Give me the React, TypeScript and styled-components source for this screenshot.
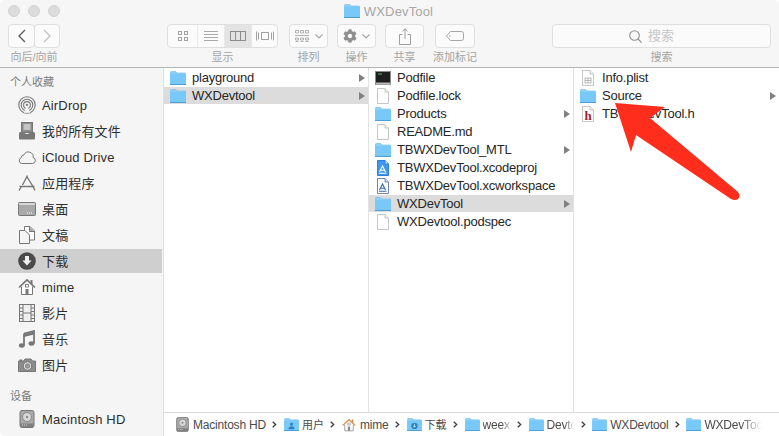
import React from 'react';
import styled, { createGlobalStyle } from 'styled-components';
import { FaCog } from 'react-icons/fa';

const FONT = '"Liberation Sans", "Noto Sans CJK SC", sans-serif';

const GlobalStyle = createGlobalStyle`
    html, body {
        margin: 0;
        padding: 0;
        background: #ffffff;
        overflow: hidden;
    }
    * {
        box-sizing: border-box;
    }
`;

// ---- icons ----

const FolderIcon = ({ size = 16, glyph }: { size?: number; glyph?: string }) => (
    <svg width={size} height={Math.round(size * 0.875)} viewBox="0 0 16 14">
        <path d="M0.5 1.2Q0.5 0.5 1.2 0.5H5.6L7 2H15Q15.6 2 15.6 2.7V4H0.5Z" fill="#8bd0f8" stroke="#6fb9ea" strokeWidth="0.6" />
        <rect x="0" y="3" width="16" height="11" rx="0.6" fill="#78c8fa" />
        <rect x="0" y="13" width="16" height="1" fill="#4c9fd8" />
        {glyph === 'user' && <path d="M8 5.2a1.6 1.6 0 1 1 0 3.2a1.6 1.6 0 1 1 0-3.2zM4.8 12q.3-3 3.2-3t3.2 3z" fill="#2f7fb8" />}
        {glyph === 'down' && <g><circle cx="8" cy="8.5" r="3.4" fill="#2f7fb8" /><path d="M8 6.2v3.6M6.4 8.4L8 10l1.6-1.6" stroke="#a8dcfb" strokeWidth="1" fill="none" /></g>}
    </svg>
);

const DocIcon = ({ children }: { children?: React.ReactNode }) => (
    <svg width="14" height="16" viewBox="0 0 14 16">
        <path d="M1.5 0.5H9L12.5 4V15.5H1.5Z" fill="#ffffff" stroke="#c6c6c6" />
        <path d="M9 0.5V4H12.5" fill="#f0f0f0" stroke="#c6c6c6" />
        {children}
    </svg>
);

const TerminalIcon = () => (
    <svg width="16" height="14" viewBox="0 0 16 14">
        <rect x="0.5" y="0.5" width="15" height="13" fill="#1d1d1d" stroke="#8a8a8a" />
        <rect x="1" y="11.5" width="14" height="2" fill="#b9b9b9" />
        <path d="M3 3h4" stroke="#4fbf60" strokeWidth="1" />
    </svg>
);

const XcodeIcon = ({ solid }: { solid?: boolean }) => (
    <svg width="14" height="16" viewBox="0 0 14 16">
        <path d="M1.5 0.5H9L12.5 4V15.5H1.5Z" fill={solid ? '#3f97ee' : '#ffffff'} stroke={solid ? '#2a7fdc' : '#6f87a8'} />
        <path d="M9 0.5V4H12.5" fill="#d8e8f8" stroke={solid ? '#2a7fdc' : '#6f87a8'} />
        <path d="M3.5 12L6.5 6L9.5 12M4 10.2H9M3 13.2H10.5" stroke={solid ? '#ffffff' : '#2f67ad'} strokeWidth="1.1" fill="none" />
    </svg>
);

const PlistIcon = () => (
    <DocIcon>
        <rect x="4" y="8" width="6" height="5" fill="#ffffff" stroke="#a8a8a8" strokeWidth="0.8" />
        <path d="M4 10.5h6M7 8v5" stroke="#a8a8a8" strokeWidth="0.8" />
    </DocIcon>
);

const HeaderIcon = () => (
    <DocIcon>
        <text x="7" y="13.5" textAnchor="middle" fontFamily='"Liberation Serif", serif' fontWeight="700" fontSize="13" fill="#a3162f">h</text>
    </DocIcon>
);

const GRAY = '#777777';

const AirDropIcon = () => (
    <svg width="18" height="18" viewBox="0 0 18 18" fill="none" stroke={GRAY}>
        <circle cx="9" cy="9" r="8.2" strokeWidth="1.1" />
        <circle cx="9" cy="9" r="5.8" strokeWidth="1.1" />
        <circle cx="9" cy="9" r="3.4" strokeWidth="1.1" />
        <circle cx="9" cy="9" r="1.2" fill={GRAY} stroke="none" />
        <path d="M5.8 16.8L9 9l3.2 7.8z" fill="#f5f5f5" stroke="none" />
    </svg>
);

const AllFilesIcon = () => (
    <svg width="18" height="18" viewBox="0 0 18 18">
        <rect x="3.5" y="0.5" width="11" height="10" fill="#8a8a8a" stroke={GRAY} />
        <path d="M5.5 3h7M5.5 5h7M5.5 7h7" stroke="#ffffff" />
        <path d="M2 10h4q.5 2 3 2t3-2h4l1 1v5.5q0 1-1 1H2q-1 0-1-1V11z" fill={GRAY} />
    </svg>
);

const CloudIcon = () => (
    <svg width="18" height="18" viewBox="0 0 18 18">
        <path d="M3.8 15.500H14.500a3 3 0 0 0 .6-5.900A4.800 4.800 0 0 0 6 6.800a3 3 0 0 0-2.800 2.900A3 3 0 0 0 3.800 15.500z" fill="none" stroke={GRAY} />
    </svg>
);

const AppsIcon = () => (
    <svg width="18" height="18" viewBox="0 0 18 18" fill="none" stroke={GRAY} strokeWidth="1.4">
        <path d="M9.5 1.5L4.5 11M1 16.5L3.5 12.5M8.5 2L15 12.5L17 16.5M1.5 12.5H16.5" />
    </svg>
);

const DesktopIcon = () => (
    <svg width="18" height="18" viewBox="0 0 18 18">
        <rect x="0.5" y="2.5" width="17" height="13" rx="1" fill="#a9a9a9" stroke={GRAY} />
        <rect x="1" y="3" width="16" height="2" fill="#d6d6d6" />
        <path d="M9 13h1M11 13h1M13 13h1" stroke="#ffffff" />
    </svg>
);

const DocumentsIcon = () => (
    <svg width="18" height="18" viewBox="0 0 18 18">
        <path d="M6.5 0.5H12L16.5 5V14H6.5Z" fill="#ffffff" stroke={GRAY} />
        <path d="M11.5 1V5.5H16" fill="#a8a8a8" stroke={GRAY} />
        <path d="M1.5 4.5H7L11.5 9V17.5H1.5Z" fill="#f5f5f5" stroke={GRAY} />
    </svg>
);

const DownloadsIcon = () => (
    <svg width="18" height="18" viewBox="0 0 18 18">
        <circle cx="9" cy="9" r="8.8" fill="#4a4a4a" />
        <path d="M7 4h4v4.5h2.6L9 13.6L4.4 8.5H7z" fill="#f0f0f0" />
    </svg>
);

const HomeIcon = ({ color = GRAY, roof = GRAY, size = 18 }: { color?: string; roof?: string; size?: number }) => (
    <svg width={size} height={size} viewBox="0 0 18 18" fill="none">
        <path d="M3.5 8.5V16.5H14.5V8.5" stroke={color} fill="#ffffff" />
        <path d="M1 9.5L9 2L17 9.5" stroke={roof} strokeWidth="1.7" />
        <rect x="12.5" y="2" width="2" height="4" fill={roof} />
        <rect x="7.5" y="11" width="3" height="5.5" fill={color} />
        <rect x="7.5" y="6.5" width="3" height="2.5" stroke={color} strokeWidth="0.8" />
    </svg>
);

const MoviesIcon = () => (
    <svg width="18" height="18" viewBox="0 0 18 18">
        <rect x="1.5" y="0.5" width="15" height="17" fill="#efefef" stroke={GRAY} />
        <path d="M5 1v16M13 1v16M5 9h8M1.5 4h3.5M1.5 7.5h3.5M1.5 11h3.5M1.5 14.500h3.500M13 4h3.500M13 7.500h3.500M13 11h3.500M13 14.500h3.500" stroke={GRAY} fill="none" />
    </svg>
);

const MusicIcon = () => (
    <svg width="18" height="18" viewBox="0 0 18 18">
        <path d="M6 3.500L16 1V13.500" fill="none" stroke={GRAY} strokeWidth="1.800" />
        <path d="M6 3.500V15.500" stroke={GRAY} strokeWidth="1.800" />
        <path d="M6 4L16 1.500V4.500L6 7z" fill={GRAY} />
        <ellipse cx="3.800" cy="15.500" rx="2.900" ry="2.200" fill={GRAY} />
        <ellipse cx="13.500" cy="13.500" rx="2.900" ry="2.200" fill={GRAY} />
    </svg>
);

const CameraIcon = () => (
    <svg width="18" height="18" viewBox="0 0 18 18">
        <path d="M0.500 5H5.500L7 3H13L14.500 5H17.500V15.500H0.500Z" fill="#8c8c8c" stroke={GRAY} />
        <rect x="1.500" y="3.500" width="2.500" height="1.500" fill={GRAY} />
        <circle cx="9.500" cy="10" r="4.200" fill="#e2e2e2" stroke={GRAY} />
        <circle cx="9.500" cy="10" r="2.300" fill="#9a9a9a" stroke={GRAY} strokeWidth="0.700" />
    </svg>
);

const DriveIcon = ({ size = 18 }: { size?: number }) => (
    <svg width={size} height={size} viewBox="0 0 18 18">
        <rect x="2" y="0.500" width="14" height="17" rx="2" fill="#a9a9a9" stroke={GRAY} />
        <circle cx="9" cy="7" r="4.500" fill="#d8d8d8" stroke="#8a8a8a" />
        <circle cx="9" cy="7" r="1.200" fill="#8a8a8a" />
        <rect x="2.500" y="13.500" width="13" height="3.500" fill="#808080" />
        <path d="M4 15h1M6 15h1M8 15h1" stroke="#d8d8d8" />
    </svg>
);

const BackIcon = () => (
    <svg width="10" height="14" viewBox="0 0 10 14" fill="none" stroke="#5c5c5c" strokeWidth="1.400">
        <path d="M8 1L2 7L8 13" />
    </svg>
);

const ForwardIcon = () => (
    <svg width="10" height="14" viewBox="0 0 10 14" fill="none" stroke="#c2c2c2" strokeWidth="1.400">
        <path d="M2 1L8 7L2 13" />
    </svg>
);

const IconView = () => (
    <svg width="10" height="10" viewBox="0 0 10 10" fill="none" stroke="#a2a2a2">
        <rect x="0.500" y="0.500" width="3" height="3" />
        <rect x="6.500" y="0.500" width="3" height="3" />
        <rect x="0.500" y="6.500" width="3" height="3" />
        <rect x="6.500" y="6.500" width="3" height="3" />
    </svg>
);

const ListView = () => (
    <svg width="14" height="10" viewBox="0 0 14 10" stroke="#a8a8a8">
        <path d="M0 0.500h14M0 3.500h14M0 6.500h14M0 9.500h14" />
    </svg>
);

const ColumnView = () => (
    <svg width="16" height="10" viewBox="0 0 16 10" fill="none" stroke="#8c8c8c">
        <rect x="0.500" y="0.500" width="15" height="9" />
        <path d="M5.500 0.500v9M10.500 0.500v9" />
    </svg>
);

const CoverView = () => (
    <svg width="18" height="10" viewBox="0 0 18 10" fill="none" stroke="#a2a2a2">
        <rect x="5.500" y="1.500" width="7" height="7" />
        <path d="M0.500 0.500v9M2.500 1.500v7M15.500 1.500v7M17.500 0.500v9" />
    </svg>
);

const SortIcon = () => (
    <svg width="14" height="13" viewBox="0 0 14 13" fill="none" stroke="#a8a8a8" strokeWidth="0.900">
        <path d="M0.500 0.500h3v2.500h-3zM5.500 0.500h3v2.500h-3zM10.500 0.500h3v2.500h-3z" />
        <path d="M0 5.500h14" />
        <path d="M0.500 8h3v2h-3zM5.500 8h3v2h-3zM10.500 8h3v2h-3z" />
        <path d="M0.500 11.500h3M5.500 11.500h3M10.500 11.500h3" />
    </svg>
);

const DownCaret = () => (
    <svg width="8" height="5" viewBox="0 0 8 5" fill="none" stroke="#a4a4a4" strokeWidth="1.100">
        <path d="M0.500 0.500L4 4L7.500 0.500" />
    </svg>
);

const ShareIcon = () => (
    <svg width="12" height="17" viewBox="0 0 12 17" fill="none" stroke="#9e9e9e">
        <path d="M3.500 6.500H0.500V16.500H11.500V6.500H8.500" />
        <path d="M6 1V11M3.500 3.200L6 0.800L8.500 3.200" />
    </svg>
);

const TagIcon = () => (
    <svg width="18" height="10" viewBox="0 0 18 10" fill="none" stroke="#a6a6a6">
        <path d="M4.500 0.500H15.500Q17.500 0.500 17.500 2.500V7.500Q17.500 9.500 15.500 9.500H4.500L0.500 5Z" />
        <circle cx="3.800" cy="5" r="0.700" fill="#a6a6a6" stroke="none" />
    </svg>
);

const SearchIcon = () => (
    <svg width="13" height="13" viewBox="0 0 13 13" fill="none" stroke="#8e8e8e" strokeWidth="1.100">
        <circle cx="5.500" cy="5.500" r="4.800" />
        <path d="M9 9L12.600 12.600" />
    </svg>
);

const PathChevron = () => (
    <svg width="5" height="7" viewBox="0 0 5 7" fill="none" stroke="#3a3a3a" strokeWidth="1.300">
        <path d="M0.700 0.700L3.700 3.500L0.700 6.300" />
    </svg>
);

// ---- data ----

const FAVORITES = [
    { label: 'AirDrop', icon: <AirDropIcon /> },
    { label: '我的所有文件', icon: <AllFilesIcon /> },
    { label: 'iCloud Drive', icon: <CloudIcon /> },
    { label: '应用程序', icon: <AppsIcon /> },
    { label: '桌面', icon: <DesktopIcon /> },
    { label: '文稿', icon: <DocumentsIcon /> },
    { label: '下载', icon: <DownloadsIcon />, selected: true },
    { label: 'mime', icon: <HomeIcon /> },
    { label: '影片', icon: <MoviesIcon /> },
    { label: '音乐', icon: <MusicIcon /> },
    { label: '图片', icon: <CameraIcon /> },
];

type Entry = { name: string; icon: React.ReactNode; more?: boolean; selected?: boolean };

const COLUMNS: Entry[][] = [
    [
        { name: 'playground', icon: <FolderIcon />, more: true },
        { name: 'WXDevtool', icon: <FolderIcon />, more: true, selected: true },
    ],
    [
        { name: 'Podfile', icon: <TerminalIcon /> },
        { name: 'Podfile.lock', icon: <DocIcon /> },
        { name: 'Products', icon: <FolderIcon />, more: true },
        { name: 'README.md', icon: <DocIcon /> },
        { name: 'TBWXDevTool_MTL', icon: <FolderIcon />, more: true },
        { name: 'TBWXDevTool.xcodeproj', icon: <XcodeIcon solid /> },
        { name: 'TBWXDevTool.xcworkspace', icon: <XcodeIcon /> },
        { name: 'WXDevTool', icon: <FolderIcon />, more: true, selected: true },
        { name: 'WXDevtool.podspec', icon: <DocIcon /> },
    ],
    [
        { name: 'Info.plist', icon: <PlistIcon /> },
        { name: 'Source', icon: <FolderIcon />, more: true },
        { name: 'TBWXDevTool.h', icon: <HeaderIcon /> },
    ],
];

type CrumbItem = { label: string; icon: React.ReactNode; cjk?: boolean; fade?: boolean; pull?: number };

const CRUMBS: CrumbItem[] = [
    { label: 'Macintosh HD', icon: <DriveIcon size={15} /> },
    { label: '用户', icon: <FolderIcon size={15} glyph="user" />, cjk: true },
    { label: 'mime', icon: <HomeIcon size={14} color="#8a8a8a" roof="#d98a3a" /> },
    { label: '下载', icon: <FolderIcon size={15} glyph="down" />, cjk: true },
    { label: 'weex-', icon: <FolderIcon size={15} />, fade: true, pull: 3 },
    { label: 'Devtc', icon: <FolderIcon size={15} />, fade: true, pull: 2 },
    { label: 'WXDevtool', icon: <FolderIcon size={15} /> },
    { label: 'WXDevTool', icon: <FolderIcon size={15} />, fade: true },
];

export default function App() {
    return (
        <Window>
            <GlobalStyle />
            <TitleBar>
                <Lights>
                    <Light />
                    <Light />
                    <Light />
                </Lights>
                <FolderIcon />
                <TitleText>WXDevTool</TitleText>
            </TitleBar>
            <Toolbar>
                <ToolGroup>
                    <NavButtons>
                        <ToolButton $width={27}><BackIcon /></ToolButton>
                        <ToolButton $width={26}><ForwardIcon /></ToolButton>
                    </NavButtons>
                    <ToolLabel>向后/向前</ToolLabel>
                </ToolGroup>
                <ToolGroup $left={107}>
                    <Segments>
                        <Segment $width={29}><IconView /></Segment>
                        <Segment $width={27}><ListView /></Segment>
                        <Segment $width={27} $active><ColumnView /></Segment>
                        <Segment $width={26}><CoverView /></Segment>
                    </Segments>
                    <ToolLabel>显示</ToolLabel>
                </ToolGroup>
                <ToolGroup $left={11}>
                    <ToolButton $width={39} $gap={6}><SortIcon /><DownCaret /></ToolButton>
                    <ToolLabel>排列</ToolLabel>
                </ToolGroup>
                <ToolGroup $left={9}>
                    <ToolButton $width={39} $gap={5}><FaCog size={14} color="#8f8f8f" /><DownCaret /></ToolButton>
                    <ToolLabel>操作</ToolLabel>
                </ToolGroup>
                <ToolGroup $left={9}>
                    <ToolButton $width={39}><ShareIcon /></ToolButton>
                    <ToolLabel>共享</ToolLabel>
                </ToolGroup>
                <ToolGroup $left={9}>
                    <ToolButton $width={40}><TagIcon /></ToolButton>
                    <ToolLabel>添加标记</ToolLabel>
                </ToolGroup>
                <ToolGroup $left={75}>
                    <SearchBox>
                        <SearchIcon />
                        <span>搜索</span>
                    </SearchBox>
                    <ToolLabel>搜索</ToolLabel>
                </ToolGroup>
            </Toolbar>
            <Body>
                <Sidebar>
                    <SectionTitle>个人收藏</SectionTitle>
                    {FAVORITES.map((item) => (
                        <SideRow key={item.label} $selected={item.selected}>
                            <SideIcon>{item.icon}</SideIcon>
                            <SideLabel>{item.label}</SideLabel>
                        </SideRow>
                    ))}
                    <SectionTitle $spaced>设备</SectionTitle>
                    <SideRow>
                        <SideIcon><DriveIcon /></SideIcon>
                        <SideLabel>Macintosh HD</SideLabel>
                    </SideRow>
                </Sidebar>
                <Browser>
                    <Columns>
                        {COLUMNS.map((entries, index) => (
                            <Column key={index} $last={index === COLUMNS.length - 1}>
                                {entries.map((entry) => (
                                    <FileRow key={entry.name} $selected={entry.selected}>
                                        <FileIcon>{entry.icon}</FileIcon>
                                        <FileName>{entry.name}</FileName>
                                        {entry.more && <MoreArrow />}
                                    </FileRow>
                                ))}
                            </Column>
                        ))}
                    </Columns>
                    <PathBar>
                        {CRUMBS.map((crumb, index) => (
                            <React.Fragment key={index}>
                                {index > 0 && <ChevronSlot><PathChevron /></ChevronSlot>}
                                <Crumb>
                                    <CrumbIcon>{crumb.icon}</CrumbIcon>
                                    <CrumbText $cjk={crumb.cjk} $fade={crumb.fade} $pull={crumb.pull}>{crumb.label}</CrumbText>
                                </Crumb>
                            </React.Fragment>
                        ))}
                    </PathBar>
                </Browser>
            </Body>
            <ArrowMark width="779" height="436" viewBox="0 0 779 436">
                <path
                    d="M615 103L665 107L650 118L738 192Q741 196 738 199Q735 201 731 199L636 135L631 152Z"
                    fill="#ff2d1c"
                />
            </ArrowMark>
        </Window>
    );
}

const Window = styled.div`
    position: relative;
    width: 779px;
    height: 436px;
    display: flex;
    flex-direction: column;
    overflow: hidden;
    border-radius: 5px;
    background: #ffffff;
    font-family: ${FONT};
`;

const TitleBar = styled.div`
    position: relative;
    height: 22px;
    flex: none;
    display: flex;
    align-items: center;
    justify-content: center;
    column-gap: 4px;
    padding-right: 2px;
    background: #f6f6f6;
`;

const Lights = styled.div`
    position: absolute;
    left: 8px;
    top: 5px;
    display: flex;
    column-gap: 8px;
`;

const Light = styled.span`
    width: 12px;
    height: 12px;
    border-radius: 50%;
    background: #dcdcdc;
    border: 1px solid #d2d2d2;
`;

const TitleText = styled.span`
    font-size: 13px;
    letter-spacing: 0.15px;
    color: #a6a6a6;
`;

const Toolbar = styled.div`
    height: 46px;
    flex: none;
    display: flex;
    align-items: flex-start;
    padding: 2px 0 0 8px;
    background: #f6f6f6;
    border-bottom: 1px solid #b4b4b4;
`;

const ToolGroup = styled.div<{ $left?: number }>`
    display: flex;
    flex-direction: column;
    align-items: center;
    margin-left: ${(props) => props.$left ?? 0}px;
`;

const ToolLabel = styled.span`
    margin-top: 2px;
    font-size: 11px;
    line-height: 14px;
    color: #a4a4a4;
    white-space: nowrap;
`;

const NavButtons = styled.div`
    display: flex;
`;

const ToolButton = styled.div<{ $width: number; $gap?: number }>`
    width: ${(props) => props.$width}px;
    height: 24px;
    display: flex;
    align-items: center;
    justify-content: center;
    column-gap: ${(props) => props.$gap ?? 0}px;
    background: #fbfbfb;
    border: 1px solid #dfdfdf;
    border-radius: 4px;

    & + & {
        margin-left: -1px;
    }
`;

const Segments = styled.div`
    display: flex;
    height: 24px;
    border: 1px solid #dfdfdf;
    border-radius: 4px;
    overflow: hidden;
    background: #fbfbfb;
`;

const Segment = styled.div<{ $width: number; $active?: boolean }>`
    width: ${(props) => props.$width}px;
    display: flex;
    align-items: center;
    justify-content: center;
    background: ${(props) => (props.$active ? '#e3e3e3' : 'transparent')};
    border-left: 1px solid #e8e8e8;

    &:first-child {
        border-left: 0;
    }
`;

const SearchBox = styled.div`
    width: 219px;
    height: 24px;
    display: flex;
    align-items: center;
    justify-content: center;
    column-gap: 6px;
    background: #fbfbfb;
    border: 1px solid #dfdfdf;
    border-radius: 4px;
    padding-right: 20px;
    font-size: 13px;
    line-height: 16px;
    color: #c6c6c6;
`;

const Body = styled.div`
    flex: 1;
    min-height: 0;
    display: flex;
`;

const Sidebar = styled.aside`
    width: 164px;
    flex: none;
    padding-top: 6px;
    background: #f5f5f5;
    border-right: 1px solid #e0e0e0;
`;

const SectionTitle = styled.div<{ $spaced?: boolean }>`
    height: 16px;
    margin: ${(props) => (props.$spaced ? '11px' : '0')} 0 3px;
    padding-left: 10px;
    font-size: 11px;
    line-height: 16px;
    color: #7c7c7c;
`;

const SideRow = styled.div<{ $selected?: boolean }>`
    height: 24px;
    margin: 0 1px 2px 0;
    display: flex;
    align-items: center;
    column-gap: 6px;
    padding-left: 18px;
    background: ${(props) => (props.$selected ? '#cfcfcf' : 'transparent')};
`;

const SideIcon = styled.span`
    width: 18px;
    height: 18px;
    display: flex;
`;

const SideLabel = styled.span`
    margin-top: 2px;
    font-size: 13px;
    line-height: 16px;
    letter-spacing: 0.15px;
    color: #2e2e2e;
`;

const Browser = styled.main`
    flex: 1;
    min-width: 0;
    display: flex;
    flex-direction: column;
`;

const Columns = styled.div`
    flex: 1;
    min-height: 0;
    display: flex;
`;

const Column = styled.section<{ $last?: boolean }>`
    flex: ${(props) => (props.$last ? '1' : '0 0 205px')};
    padding-top: 1px;
    border-right: ${(props) => (props.$last ? '0' : '1px solid #e2e2e2')};
`;

const FileRow = styled.div<{ $selected?: boolean }>`
    height: 17px;
    margin-bottom: 1px;
    display: flex;
    align-items: center;
    padding: 0 3px 0 6px;
    background: ${(props) => (props.$selected ? '#dcdcdc' : 'transparent')};
`;

const FileIcon = styled.span`
    width: 16px;
    display: flex;
    justify-content: center;
    margin-right: 6px;
`;

const FileName = styled.span`
    flex: 1;
    font-size: 13px;
    line-height: 16px;
    letter-spacing: -0.22px;
    color: #262626;
    white-space: nowrap;
`;

const MoreArrow = styled.span`
    width: 0;
    height: 0;
    border-left: 6px solid #808080;
    border-top: 4px solid transparent;
    border-bottom: 4px solid transparent;
`;

const PathBar = styled.footer`
    height: 24px;
    flex: none;
    display: flex;
    align-items: center;
    padding: 0 0 0 11px;
    background: #ffffff;
    border-top: 1px solid #dcdcdc;
    overflow: hidden;
`;

const Crumb = styled.div`
    display: flex;
    align-items: center;
    column-gap: 3px;
`;

const CrumbIcon = styled.span`
    width: 15px;
    height: 15px;
    display: flex;
    align-items: center;
    justify-content: center;
`;

const CrumbText = styled.span<{ $cjk?: boolean; $fade?: boolean; $pull?: number }>`
    font-size: ${(props) => (props.$cjk ? 11 : 12)}px;
    line-height: 16px;
    letter-spacing: ${(props) => (props.$cjk ? 0 : -0.2)}px;
    color: #4a4a4a;
    white-space: nowrap;
    margin-right: ${(props) => -(props.$pull ?? 0)}px;
    ${(props) => props.$fade && `
        -webkit-mask-image: linear-gradient(to right, #000 60%, transparent 95%);
        mask-image: linear-gradient(to right, #000 60%, transparent 95%);
    `}
`;

const ChevronSlot = styled.span`
    width: 18px;
    display: flex;
    justify-content: center;
`;

const ArrowMark = styled.svg`
    position: absolute;
    left: 0;
    top: 0;
    pointer-events: none;
`;
